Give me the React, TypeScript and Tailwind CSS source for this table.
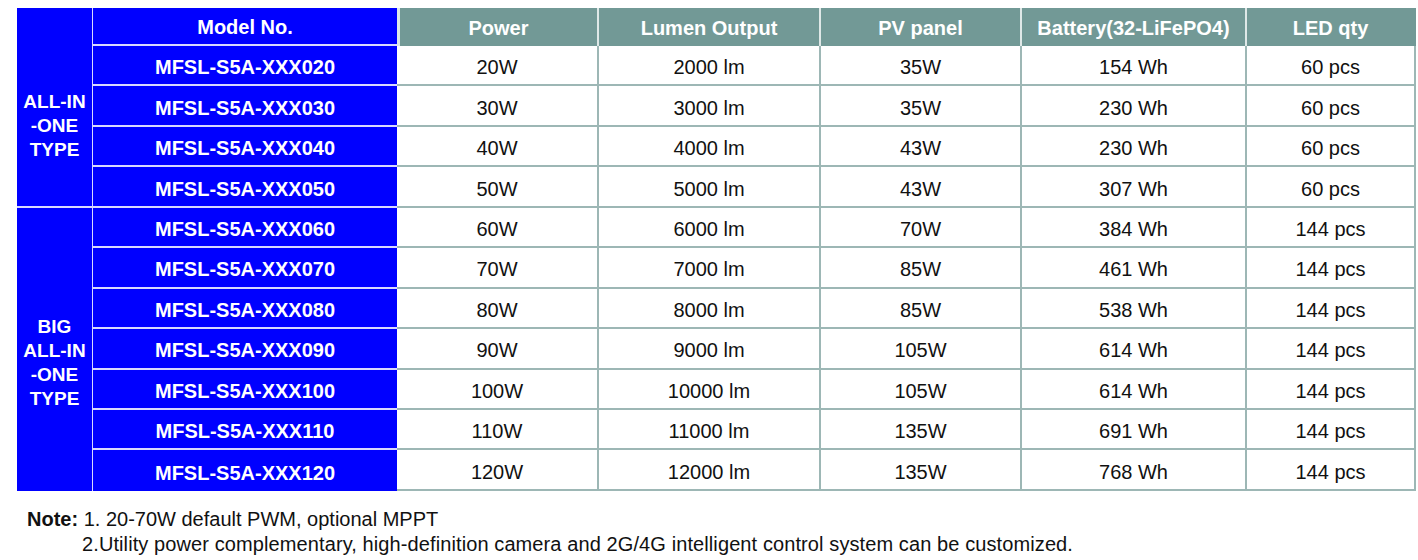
const rows = [
  ['MFSL-S5A-XXX020', '20W', '2000 lm', '35W', '154 Wh', '60 pcs'],
  ['MFSL-S5A-XXX030', '30W', '3000 lm', '35W', '230 Wh', '60 pcs'],
  ['MFSL-S5A-XXX040', '40W', '4000 lm', '43W', '230 Wh', '60 pcs'],
  ['MFSL-S5A-XXX050', '50W', '5000 lm', '43W', '307 Wh', '60 pcs'],
  ['MFSL-S5A-XXX060', '60W', '6000 lm', '70W', '384 Wh', '144 pcs'],
  ['MFSL-S5A-XXX070', '70W', '7000 lm', '85W', '461 Wh', '144 pcs'],
  ['MFSL-S5A-XXX080', '80W', '8000 lm', '85W', '538 Wh', '144 pcs'],
  ['MFSL-S5A-XXX090', '90W', '9000 lm', '105W', '614 Wh', '144 pcs'],
  ['MFSL-S5A-XXX100', '100W', '10000 lm', '105W', '614 Wh', '144 pcs'],
  ['MFSL-S5A-XXX110', '110W', '11000 lm', '135W', '691 Wh', '144 pcs'],
  ['MFSL-S5A-XXX120', '120W', '12000 lm', '135W', '768 Wh', '144 pcs'],
]

const headers = ['Power', 'Lumen Output', 'PV panel', 'Battery(32-LiFePO4)', 'LED qty']

export default function App() {
  return (
    <div className="h-[560px] w-[1418px] bg-white pl-[17px] pt-[8px] font-['Liberation_Sans',Arial,sans-serif]">
      <div className="grid grid-cols-[76px_304px_200px_222px_201px_225px_171px] grid-rows-[38px_repeat(11,40.45px)]">
        {/* header */}
        <div className="bg-[#0000ff] border-r border-[#d8d8ff]" />
        <div className="flex items-center justify-center border-b-2 border-[#d8d8ff] bg-[#0000ff] pt-[2px] text-[20px] font-bold text-white">
          Model No.
        </div>
        {headers.map((h, i) => (
          <div
            key={h}
            className={
              'flex items-center justify-center bg-[#729996] pt-[2px] text-[20px] font-bold text-white ' +
              (i === 0 ? 'border-l-[3px] border-[#dfe8e7] ' : 'border-l-2 border-[#dfe8e7] ') +
              (i === headers.length - 1 ? 'border-r-2 border-r-[#729996]' : '')
            }
          >
            {h}
          </div>
        ))}

        {rows.map((r, i) => {
          const last = i === rows.length - 1
          return (
            <div key={r[0]} className="contents">
              {i === 0 && (
                <div className="row-span-4 flex flex-col items-center justify-center border-r border-b-2 border-[#d8d8ff] bg-[#0000ff] text-[19px] font-bold leading-6 text-white">
                  <span>ALL-IN</span>
                  <span>-ONE</span>
                  <span>TYPE</span>
                </div>
              )}
              {i === 4 && (
                <div className="row-span-7 flex flex-col items-center justify-center border-r border-[#d8d8ff] bg-[#0000ff] pt-7 text-[19px] font-bold leading-6 text-white">
                  <span>BIG</span>
                  <span>ALL-IN</span>
                  <span>-ONE</span>
                  <span>TYPE</span>
                </div>
              )}
              <div
                className={
                  'flex items-center justify-center bg-[#0000ff] pt-[4px] text-[20px] font-bold text-white ' +
                  (last ? '' : 'border-b-2 border-[#d8d8ff]')
                }
              >
                {r[0]}
              </div>
              {r.slice(1).map((c, j) => (
                <div
                  key={j}
                  className={
                    'flex items-center justify-center border-b-2 border-[#9db7b5] pt-[4px] text-[20px] text-[#111111] ' +
                    (j === 0 ? '' : 'border-l-2 ') +
                    (j === 4 ? 'border-r-2' : '')
                  }
                >
                  {c}
                </div>
              ))}
            </div>
          )
        })}
      </div>

      <div className="mt-[16px] pl-[10px] text-[20px] leading-[25px] text-[#111111]">
        <div>
          <span className="font-bold">Note:</span> 1. 20-70W default PWM, optional MPPT
        </div>
        <div className="pl-[55px] tracking-[0.1px]">
          2.Utility power complementary, high-definition camera and 2G/4G intelligent control system can be customized.
        </div>
      </div>
    </div>
  )
}
